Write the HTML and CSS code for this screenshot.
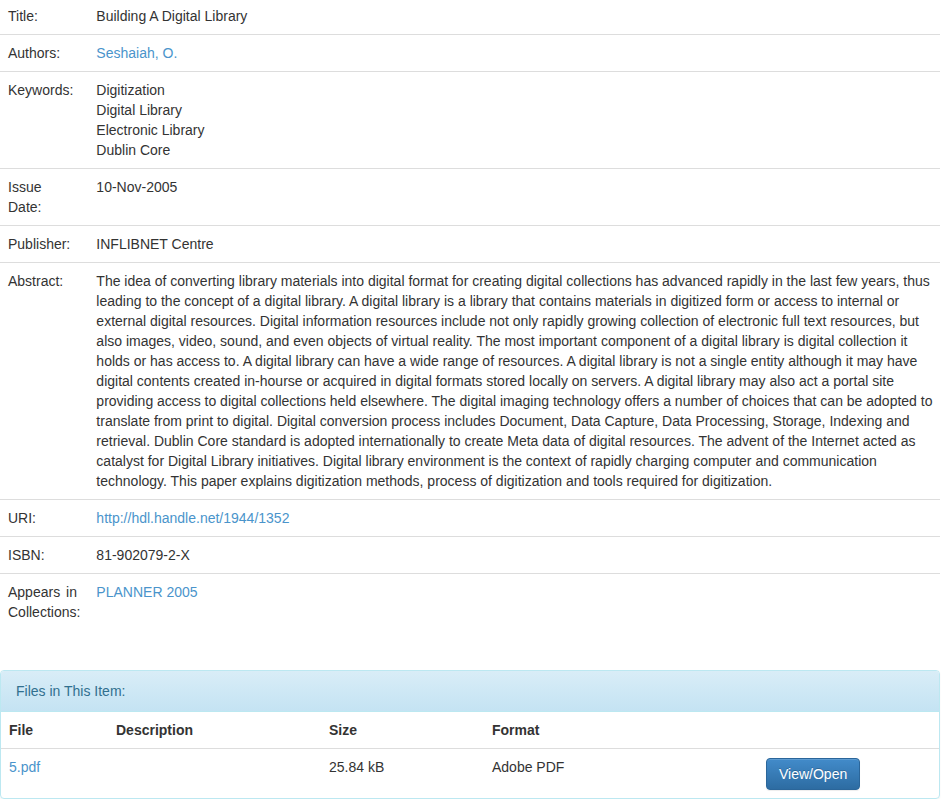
FILE: index.html
```html
<!DOCTYPE html>
<html lang="en">

<head>
    <meta charset="utf-8">
    <title>Building A Digital Library</title>
    <link rel="stylesheet" href="styles.css">
</head>

<body>
    <div class="container">
        <table class="itemDisplayTable">
            <tr>
                <td class="metadataFieldLabel">Title:</td>
                <td class="metadataFieldValue">Building A Digital Library</td>
            </tr>
            <tr>
                <td class="metadataFieldLabel">Authors:</td>
                <td class="metadataFieldValue"><a href="#">Seshaiah, O.</a></td>
            </tr>
            <tr>
                <td class="metadataFieldLabel">Keywords:</td>
                <td class="metadataFieldValue">Digitization<br>Digital Library<br>Electronic Library<br>Dublin Core</td>
            </tr>
            <tr>
                <td class="metadataFieldLabel">Issue Date:</td>
                <td class="metadataFieldValue">10-Nov-2005</td>
            </tr>
            <tr>
                <td class="metadataFieldLabel">Publisher:</td>
                <td class="metadataFieldValue">INFLIBNET Centre</td>
            </tr>
            <tr>
                <td class="metadataFieldLabel">Abstract:</td>
                <td class="metadataFieldValue">The idea of converting library materials into digital format for creating digital collections has advanced rapidly in the last few years, thus leading to the concept of a digital library. A digital library is a library that contains materials in digitized form or access to internal or external digital resources. Digital information resources include not only rapidly growing collection of electronic full text resources, but also images, video, sound, and even objects of virtual reality. The most important component of a digital library is digital collection it holds or has access to. A digital library can have a wide range of resources. A digital library is not a single entity although it may have digital contents created in-hourse or acquired in digital formats stored locally on servers. A digital library may also act a portal site providing access to digital collections held elsewhere. The digital imaging technology offers a number of choices that can be adopted to translate from print to digital. Digital conversion process includes Document, Data Capture, Data Processing, Storage, Indexing and retrieval. Dublin Core standard is adopted internationally to create Meta data of digital resources. The advent of the Internet acted as catalyst for Digital Library initiatives. Digital library environment is the context of rapidly charging computer and communication technology. This paper explains digitization methods, process of digitization and tools required for digitization.</td>
            </tr>
            <tr>
                <td class="metadataFieldLabel">URI:</td>
                <td class="metadataFieldValue"><a href="#">http://hdl.handle.net/1944/1352</a></td>
            </tr>
            <tr>
                <td class="metadataFieldLabel">ISBN:</td>
                <td class="metadataFieldValue">81-902079-2-X</td>
            </tr>
            <tr>
                <td class="metadataFieldLabel">Appears in Collections:</td>
                <td class="metadataFieldValue"><a href="#">PLANNER 2005</a></td>
            </tr>
        </table>

        <div class="panel">
            <div class="panel-heading">Files in This Item:</div>
            <table class="fileTable">
                <tr>
                    <th class="colFile">File</th>
                    <th class="colDesc">Description</th>
                    <th class="colSize">Size</th>
                    <th class="colFormat">Format</th>
                    <th></th>
                </tr>
                <tr>
                    <td><a href="#">5.pdf</a></td>
                    <td></td>
                    <td>25.84 kB</td>
                    <td>Adobe PDF</td>
                    <td class="colAction"><a class="btn" href="#">View/Open</a></td>
                </tr>
            </table>
        </div>
    </div>
</body>

</html>
```

FILE: styles.css
```css
body {
    margin: 0;
    font-family: "Liberation Sans", Arial, sans-serif;
    font-size: 14px;
    line-height: 20px;
    color: #333;
    background-color: #fff;
}

a {
    color: #4a94cb;
    text-decoration: none;
}

.container {
    width: 940px;
}

table {
    width: 100%;
    border-collapse: collapse;
    border-spacing: 0;
}

td, th {
    padding: 8px;
    text-align: left;
    vertical-align: top;
}

.itemDisplayTable {
    margin-bottom: 40px;
}

.itemDisplayTable td {
    border-top: 1px solid #ddd;
}

.itemDisplayTable tr:first-child td {
    border-top: 0;
    padding-top: 6px;
}

.metadataFieldLabel {
    width: 72px;
    word-spacing: 2px;
}

.metadataFieldValue {
    padding-right: 2px;
}

.panel {
    border: 1px solid #bce8f1;
    border-radius: 4px;
    box-shadow: 0 1px 2px rgba(0, 0, 0, 0.05);
    overflow: hidden;
}

.panel-heading {
    padding: 10px 15px;
    color: #31708f;
    background-image: linear-gradient(to bottom, #d9edf7 0%, #c4e3f3 100%);
    border-bottom: 1px solid #bce8f1;
}

.fileTable th {
    font-weight: bold;
}

.fileTable tr + tr td {
    border-top: 1px solid #ddd;
}

.colFile {
    width: 91px;
}

.colDesc {
    width: 197px;
}

.colSize {
    width: 147px;
}

.colFormat {
    width: 258px;
}

.colAction {
    padding-top: 9px;
}

.btn {
    display: inline-block;
    padding: 5px 12px;
    font-size: 14px;
    line-height: 20px;
    color: #fff;
    background-image: linear-gradient(to bottom, #428bca 0%, #2d6ca2 100%);
    border: 1px solid #2b669a;
    border-radius: 4px;
    box-shadow: inset 0 1px 0 rgba(255, 255, 255, 0.15), 0 1px 1px rgba(0, 0, 0, 0.075);
    text-shadow: 0 -1px 0 rgba(0, 0, 0, 0.2);
}
```
